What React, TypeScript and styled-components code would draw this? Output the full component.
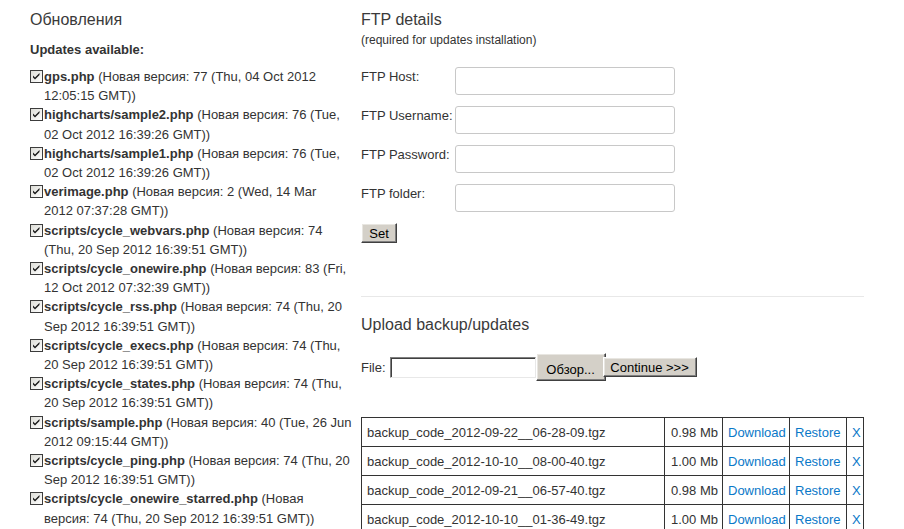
import React from 'react';
import styled, { createGlobalStyle } from 'styled-components';

const GlobalStyle = createGlobalStyle`
  html, body {
    margin: 0;
    padding: 0;
    background: #fff;
  }
  body {
    font-family: "Liberation Sans", Arial, sans-serif;
    font-size: 13px;
    color: #333;
  }
`;

const Page = styled.div`
  display: flex;
  align-items: flex-start;
  gap: 10px;
  padding: 10px 0 0 30px;
`;

const LeftColumn = styled.div`
  width: 321px;
  flex-shrink: 0;
`;

const RightColumn = styled.div`
  width: 503px;
  flex-shrink: 0;
`;

const Heading = styled.h2`
  margin: 0;
  font-size: 16px;
  line-height: 20px;
  font-weight: normal;
  color: #3a3a3a;
`;

const SubNote = styled.div`
  font-size: 12px;
  line-height: 16px;
  margin-top: 2px;
`;

const UpdatesTitle = styled.div`
  font-weight: bold;
  line-height: 19px;
  margin-top: 10px;
`;

const UpdateList = styled.ul`
  list-style: none;
  margin: 8px 0 0;
  padding: 0;
`;

const UpdateItem = styled.li`
  padding-left: 14px;
  line-height: 19.2px;
  white-space: nowrap;
`;

const CheckBox = styled.span`
  display: inline-block;
  box-sizing: border-box;
  width: 13px;
  height: 13px;
  margin-left: -14px;
  margin-right: 1px;
  vertical-align: -2px;
  border: 1px solid #3c3c3c;
  background: linear-gradient(135deg, #dcdcd6 0%, #fff 100%);

  svg {
    display: block;
  }
`;

const FileName = styled.b`
  font-weight: bold;
`;

const Form = styled.div`
  margin-top: 19px;
`;

const FormRow = styled.div`
  display: flex;
  align-items: flex-start;
  margin-top: 11px;

  &:first-of-type {
    margin-top: 0;
  }
`;

const FieldLabel = styled.label`
  width: 94px;
  flex-shrink: 0;
  padding-top: 2px;
  line-height: 16px;
`;

const TextInput = styled.input`
  box-sizing: border-box;
  width: 220px;
  height: 28px;
  border: 1px solid #c8c8c8;
  border-radius: 3px;
  background: #fff;
  outline: none;
`;

const ClassicButton = styled.button<{ $tall?: boolean; $w: number; $overlap?: boolean }>`
  box-sizing: border-box;
  width: ${p => p.$w}px;
  height: ${p => (p.$tall ? '28px' : '20px')};
  padding: ${p => (p.$tall ? '4px 0 0' : '0')};
  margin-left: ${p => (p.$overlap ? '-3px' : '0')};
  font-family: "Liberation Sans", Arial, sans-serif;
  font-size: 13px;
  color: #000;
  background: #d4d0c8;
  border: 1px solid;
  border-color: #fff #404040 #404040 #fff;
  box-shadow: inset -1px -1px 0 #808080, inset 1px 1px 0 #e8e6e1;
  border-radius: 0;
  cursor: pointer;
`;

const SetButton = styled(ClassicButton)`
  margin-top: 11px;
`;

const Divider = styled.hr`
  border: none;
  border-top: 1px solid #e8e8e8;
  margin: 53px 0 18px;
`;

const UploadRow = styled.div`
  display: flex;
  align-items: center;
  margin-top: 18px;
`;

const UploadLabel = styled.span`
  margin-right: 4px;
`;

const FileBox = styled.span`
  box-sizing: border-box;
  width: 146px;
  height: 21px;
  background: #fff;
  border: 1px solid;
  border-color: #808080 #e8e8e8 #e8e8e8 #808080;
  box-shadow: inset 1px 1px 0 #404040;
`;

const BackupTable = styled.table`
  margin-top: 36px;
  width: 503px;
  border-collapse: collapse;
  table-layout: fixed;
`;

const Cell = styled.td<{ $right?: boolean; $w: number }>`
  width: ${p => p.$w}px;
  height: 28px;
  padding: 0 ${p => (p.$right ? '4px' : '5px')} 0 5px;
  border: 1px solid #333;
  text-align: ${p => (p.$right ? 'right' : 'left')};
  white-space: nowrap;
  overflow: hidden;
`;

const TableLink = styled.a`
  color: #0a78c8;
  text-decoration: none;
`;

const Check = () => (
  <CheckBox>
    <svg width="11" height="11" viewBox="0 0 11 11">
      <path d="M2 4.5 L4 6.5 L8.5 2 L8.5 4 L4 8.5 L2 6.5 Z" fill="#1a1a1a" />
    </svg>
  </CheckBox>
);

// [file, first line of the rest, second line]
const updates = [
  ['gps.php', '(Новая версия: 77 (Thu, 04 Oct 2012', '12:05:15 GMT))'],
  ['highcharts/sample2.php', '(Новая версия: 76 (Tue,', '02 Oct 2012 16:39:26 GMT))'],
  ['highcharts/sample1.php', '(Новая версия: 76 (Tue,', '02 Oct 2012 16:39:26 GMT))'],
  ['verimage.php', '(Новая версия: 2 (Wed, 14 Mar', '2012 07:37:28 GMT))'],
  ['scripts/cycle_webvars.php', '(Новая версия: 74', '(Thu, 20 Sep 2012 16:39:51 GMT))'],
  ['scripts/cycle_onewire.php', '(Новая версия: 83 (Fri,', '12 Oct 2012 07:32:39 GMT))'],
  ['scripts/cycle_rss.php', '(Новая версия: 74 (Thu, 20', 'Sep 2012 16:39:51 GMT))'],
  ['scripts/cycle_execs.php', '(Новая версия: 74 (Thu,', '20 Sep 2012 16:39:51 GMT))'],
  ['scripts/cycle_states.php', '(Новая версия: 74 (Thu,', '20 Sep 2012 16:39:51 GMT))'],
  ['scripts/sample.php', '(Новая версия: 40 (Tue, 26 Jun', '2012 09:15:44 GMT))'],
  ['scripts/cycle_ping.php', '(Новая версия: 74 (Thu, 20', 'Sep 2012 16:39:51 GMT))'],
  ['scripts/cycle_onewire_starred.php', '(Новая', 'версия: 74 (Thu, 20 Sep 2012 16:39:51 GMT))'],
];

const ftpFields = ['FTP Host:', 'FTP Username:', 'FTP Password:', 'FTP folder:'];

const backups = [
  ['backup_code_2012-09-22__06-28-09.tgz', '0.98 Mb'],
  ['backup_code_2012-10-10__08-00-40.tgz', '1.00 Mb'],
  ['backup_code_2012-09-21__06-57-40.tgz', '0.98 Mb'],
  ['backup_code_2012-10-10__01-36-49.tgz', '1.00 Mb'],
];

export default function App() {
  return (
    <>
      <GlobalStyle />
      <Page>
        <LeftColumn>
          <Heading>Обновления</Heading>
          <UpdatesTitle>Updates available:</UpdatesTitle>
          <UpdateList>
            {updates.map(([file, first, second]) => (
              <UpdateItem key={file}>
                <Check />
                <FileName>{file}</FileName> {first}
                <br />
                {second}
              </UpdateItem>
            ))}
          </UpdateList>
        </LeftColumn>

        <RightColumn>
          <Heading>FTP details</Heading>
          <SubNote>(required for updates installation)</SubNote>
          <Form>
            {ftpFields.map(label => (
              <FormRow key={label}>
                <FieldLabel>{label}</FieldLabel>
                <TextInput type={label.includes('Password') ? 'password' : 'text'} />
              </FormRow>
            ))}
          </Form>
          <SetButton $w={36}>Set</SetButton>

          <Divider />

          <Heading>Upload backup/updates</Heading>
          <UploadRow>
            <UploadLabel>File:</UploadLabel>
            <FileBox />
            <ClassicButton $tall $w={70}>Обзор...</ClassicButton>
            <ClassicButton $w={94} $overlap>Continue &gt;&gt;&gt;</ClassicButton>
          </UploadRow>

          <BackupTable>
            <tbody>
              {backups.map(([name, size]) => (
                <tr key={name}>
                  <Cell $w={292}>{name}</Cell>
                  <Cell $w={48} $right>{size}</Cell>
                  <Cell $w={56}><TableLink href="#">Download</TableLink></Cell>
                  <Cell $w={46}><TableLink href="#">Restore</TableLink></Cell>
                  <Cell $w={6}><TableLink href="#">X</TableLink></Cell>
                </tr>
              ))}
            </tbody>
          </BackupTable>
        </RightColumn>
      </Page>
    </>
  );
}
